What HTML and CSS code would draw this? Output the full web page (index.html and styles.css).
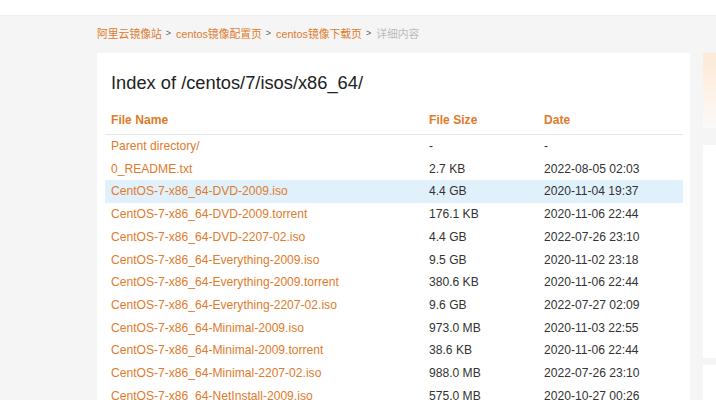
FILE: index.html
```html
<!DOCTYPE html>
<html lang="zh-CN">
<head>
<meta charset="utf-8">
<title>Index of /centos/7/isos/x86_64/</title>
<link rel="stylesheet" href="styles.css">
</head>
<body>
<div class="topbar"></div>
<div class="page">
  <div class="crumbs">
    <a class="crumb">阿里云镜像站</a><span class="sep">&gt;</span>
    <a class="crumb">centos镜像配置页</a><span class="sep">&gt;</span>
    <a class="crumb">centos镜像下载页</a><span class="sep">&gt;</span>
    <span class="current">详细内容</span>
  </div>
  <div class="layout">
    <div class="card">
      <h1 class="title">Index of /centos/7/isos/x86_64/</h1>
      <table class="files">
        <thead>
          <tr><th class="c-name">File Name</th><th class="c-size">File Size</th><th class="c-date">Date</th></tr>
        </thead>
        <tbody>
          <tr><td><a>Parent directory/</a></td><td>-</td><td>-</td></tr>
          <tr><td><a>0_README.txt</a></td><td>2.7 KB</td><td>2022-08-05 02:03</td></tr>
          <tr class="hover"><td><a>CentOS-7-x86_64-DVD-2009.iso</a></td><td>4.4 GB</td><td>2020-11-04 19:37</td></tr>
          <tr><td><a>CentOS-7-x86_64-DVD-2009.torrent</a></td><td>176.1 KB</td><td>2020-11-06 22:44</td></tr>
          <tr><td><a>CentOS-7-x86_64-DVD-2207-02.iso</a></td><td>4.4 GB</td><td>2022-07-26 23:10</td></tr>
          <tr><td><a>CentOS-7-x86_64-Everything-2009.iso</a></td><td>9.5 GB</td><td>2020-11-02 23:18</td></tr>
          <tr><td><a>CentOS-7-x86_64-Everything-2009.torrent</a></td><td>380.6 KB</td><td>2020-11-06 22:44</td></tr>
          <tr><td><a>CentOS-7-x86_64-Everything-2207-02.iso</a></td><td>9.6 GB</td><td>2022-07-27 02:09</td></tr>
          <tr><td><a>CentOS-7-x86_64-Minimal-2009.iso</a></td><td>973.0 MB</td><td>2020-11-03 22:55</td></tr>
          <tr><td><a>CentOS-7-x86_64-Minimal-2009.torrent</a></td><td>38.6 KB</td><td>2020-11-06 22:44</td></tr>
          <tr><td><a>CentOS-7-x86_64-Minimal-2207-02.iso</a></td><td>988.0 MB</td><td>2022-07-26 23:10</td></tr>
          <tr><td><a>CentOS-7-x86_64-NetInstall-2009.iso</a></td><td>575.0 MB</td><td>2020-10-27 00:26</td></tr>
        </tbody>
      </table>
    </div>
    <div class="side">
      <div class="promo"></div>
      <div class="panel tall"></div>
      <div class="panel"></div>
    </div>
  </div>
</div>
</body>
</html>
```
FILE: styles.css
```css
html, body {
  margin: 0;
  padding: 0;
  height: 100%;
  overflow: hidden;
}
body {
  font-family: "Liberation Sans", Arial, "Noto Sans CJK SC", sans-serif;
  background: #f5f5f5;
  color: #333;
}
.topbar {
  height: 15px;
  background: #fff;
  border-bottom: 1px solid #f0f0f0;
}
.page {
  padding-left: 97px;
}
.crumbs {
  height: 37px;
  display: flex;
  align-items: center;
  font-size: 10.8px;
  padding-bottom: 4px;
  box-sizing: border-box;
}
.crumb {
  color: #e07b2c;
}
.sep {
  color: #555;
  font-size: 9px;
  margin: 0 5px 0 4px;
}
.current {
  color: #bbb;
}
.layout {
  display: flex;
  gap: 13px;
  align-items: flex-start;
}
.card {
  width: 593px;
  flex: none;
  background: #fff;
  padding: 0 7px 0 8px;
  box-sizing: border-box;
  height: 400px;
}
.title {
  margin: 18px 0 0 6px;
  font-size: 18.3px;
  font-weight: normal;
  line-height: 24px;
  color: #222;
}
.files {
  margin-top: 10px;
  width: 578px;
  border-collapse: collapse;
  font-size: 12.1px;
}
.files th {
  text-align: left;
  color: #e07b2c;
  font-weight: bold;
  height: 29px;
  padding: 0 0 0 6px;
  border-bottom: 1px solid #e6e6e6;
}
.c-name { width: 312px; }
.c-size { width: 109px; }
.files td {
  height: 22.7px;
  padding: 0 0 0 6px;
  line-height: 22.7px;
  color: #333;
}
.files td a {
  color: #e07b2c;
}
.files tr.hover td {
  background: #e1f1fb;
}
.side {
  flex: 1;
  display: flex;
  flex-direction: column;
}
.promo {
  height: 75px;
  background: linear-gradient(180deg, #fde9d6 0%, #fdf3ea 60%, #fafafa 100%);
}
.panel {
  background: #fff;
  height: 80px;
  margin-top: 7px;
}
.panel.tall {
  margin-top: 17px;
  height: 213px;
}
```
